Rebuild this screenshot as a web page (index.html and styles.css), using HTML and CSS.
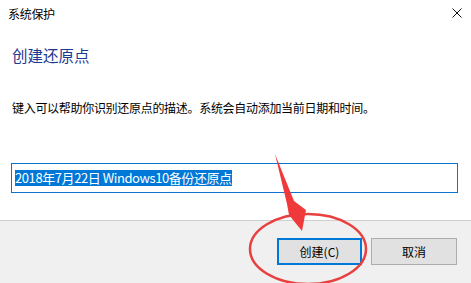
FILE: index.html
```html
<!DOCTYPE html>
<html lang="zh-CN">
  <head>
    <meta charset="UTF-8" />
    <title>系统保护</title>
    <link rel="stylesheet" href="styles.css">
  </head>
  <body>
    <div class="dialog">
      <div class="titlebar">
        <span class="title">系统保护</span>
        <svg class="close" width="10" height="10" viewBox="0 0 10 10">
          <path d="M0.5 0.5 L9.5 9.5 M9.5 0.5 L0.5 9.5" stroke="#111" stroke-width="1" fill="none" />
        </svg>
      </div>

      <div class="content">
        <h1 class="heading">创建还原点</h1>
        <p class="desc">键入可以帮助你识别还原点的描述。系统会自动添加当前日期和时间。</p>
        <div class="input">
          <span class="selected">2018年7月22日 Windows10备份还原点</span>
        </div>
      </div>

      <div class="footer">
        <button class="btn btn-default">创建(C)</button>
        <button class="btn">取消</button>
      </div>

      <!-- red annotation drawn on top of the screenshot -->
      <svg class="annotation" width="471" height="283" viewBox="0 0 471 283">
        <ellipse cx="308" cy="249" rx="58" ry="35" fill="none" stroke="#e8403f" stroke-width="2.5" />
        <polygon points="275,154 294,201 306,210 302,231 289,215 287,204" fill="#f0393a" />
      </svg>
    </div>
  </body>
</html>
```

FILE: styles.css
```css
* {
  margin: 0;
  padding: 0;
  box-sizing: border-box;
}

body {
  background: #fff;
  font-family: "Noto Sans CJK SC", "Noto Sans", sans-serif;
  color: #000;
}

.dialog {
  position: relative;
  width: 471px;
  height: 283px;
  display: flex;
  flex-direction: column;
  overflow: hidden;
}

.titlebar {
  height: 27px;
  display: flex;
  align-items: center;
  justify-content: space-between;
  padding: 0 9px 1px 8px;
}
.title {
  font-size: 12px;
  letter-spacing: -0.3px;
}
.close {
  margin-top: -1px;
}

.content {
  flex: 1;
  padding: 18px 13px 0 11px;
}
.heading {
  font-size: 15.5px;
  font-weight: normal;
  line-height: 20px;
  color: #1c3a91;
  padding-left: 1px;
}
.desc {
  margin-top: 35px;
  font-size: 12px;
  line-height: 16px;
  letter-spacing: -0.3px;
  padding-left: 1px;
}
.input {
  margin-top: 47px;
  height: 30px;
  border: 1px solid #0a74cf;
  display: flex;
  align-items: center;
  padding-left: 3px;
}
.selected {
  background: #0078d7;
  color: #fff;
  font-size: 13px;
  line-height: 16px;
  letter-spacing: -0.42px;
}

.footer {
  height: 63px;
  background: #f0f0f0;
  border-top: 1px solid #cfcfcf;
  display: flex;
  justify-content: flex-end;
  align-items: flex-start;
  gap: 9px;
  padding: 17px 14px 0 0;
}
.btn {
  width: 86px;
  height: 27px;
  background: #e1e1e1;
  border: 1px solid #adadad;
  font-family: inherit;
  font-size: 12px;
  color: #000;
}
.btn-default {
  width: 85px;
  border: 2px solid #0078d7;
}

.annotation {
  position: absolute;
  left: 0;
  top: 0;
  pointer-events: none;
}
```
